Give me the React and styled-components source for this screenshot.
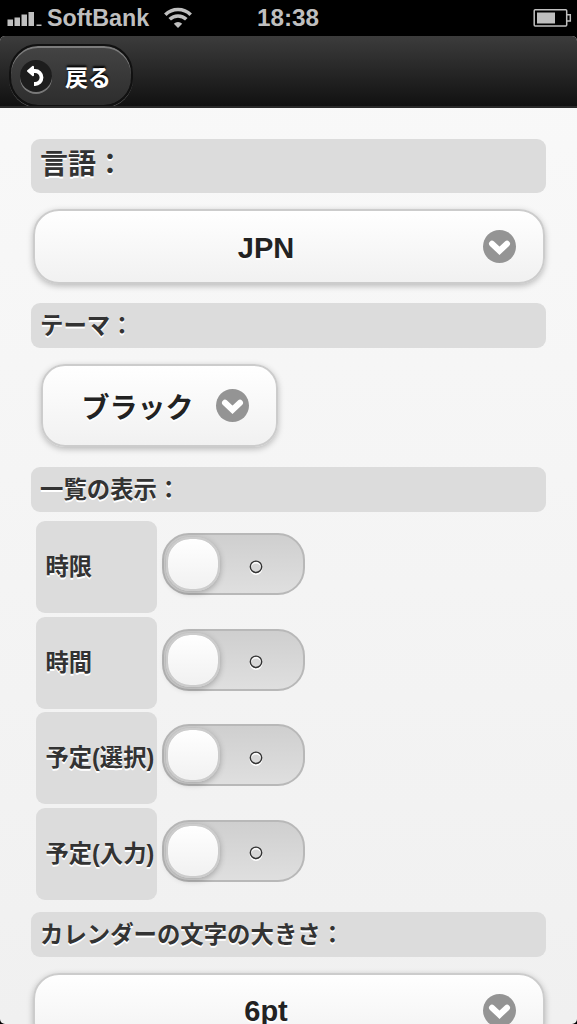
import { useState } from "react";
import styled, { createGlobalStyle } from "styled-components";

const GlobalStyle = createGlobalStyle`
  * {
    box-sizing: border-box;
  }
  body {
    margin: 0;
    background: #000;
    font-family: "Liberation Sans", "Noto Sans CJK JP", sans-serif;
    -webkit-font-smoothing: antialiased;
  }
`;

const Phone = styled.div`
  width: 577px;
  height: 1024px;
  overflow: hidden;
  display: flex;
  flex-direction: column;
  background: #000;
`;

const StatusBar = styled.div`
  height: 36px;
  flex-shrink: 0;
  display: grid;
  grid-template-columns: 1fr auto 1fr;
  align-items: center;
  padding: 0 5px 0 7px;
  color: #bfbfbf;
  font-weight: bold;
  line-height: 36px;
`;

const Carrier = styled.div`
  display: flex;
  align-items: center;
  font-size: 23.3px;
  svg {
    flex-shrink: 0;
  }
`;

const CarrierName = styled.span`
  margin: 0 15px 0 5px;
`;

const Clock = styled.div`
  padding-right: 3px;
  font-size: 24.3px;
`;

const Battery = styled.div`
  display: flex;
  justify-content: flex-end;
`;

const Screen = styled.div`
  flex: 1;
  min-height: 0;
  display: flex;
  flex-direction: column;
  overflow: hidden;
  border-radius: 5px;
  background: linear-gradient(#f9f9f9, #f0f0f0);
`;

const Header = styled.header`
  height: 72px;
  flex-shrink: 0;
  padding: 8px 9px 0;
  overflow: hidden;
  background: linear-gradient(#3c3c3c, #111);
  border-bottom: 2px solid #2a2a2a;
`;

const BackButton = styled.button`
  display: flex;
  align-items: center;
  width: 124px;
  height: 63px;
  padding: 0 0 0 9px;
  border: 2px solid #111;
  border-radius: 29px;
  background: linear-gradient(#444, #2d2d2d);
  background-clip: padding-box;
  box-shadow: inset 0 2px 0 rgba(255, 255, 255, 0.3), 0 1px 0 #565656;
  color: #fff;
  font: bold 23px "Noto Sans CJK JP", sans-serif;
  line-height: 60px;
  text-shadow: 0 -2px 2px #000;
`;

const BackIcon = styled.span`
  display: flex;
  align-items: center;
  justify-content: center;
  width: 32px;
  height: 32px;
  margin-right: 13px;
  border-radius: 50%;
  background: #1d1d1d;
  box-shadow: 0 2px 0 rgba(255, 255, 255, 0.35);
`;

const Content = styled.main`
  flex: 1;
  min-height: 0;
  padding: 31px 31px 0;
  overflow: hidden;
`;

const Heading = styled.h3`
  width: 515px;
  height: ${(props) => (props.$large ? "54px" : "45px")};
  margin: 0;
  padding-left: 9px;
  border-radius: 9px;
  background: #dcdcdc;
  color: #333;
  font: bold ${(props) => (props.$large ? "28px" : "23.4px")} "Noto Sans CJK JP", sans-serif;
  line-height: ${(props) => (props.$large ? "47px" : "42px")};
  text-shadow: 0 2px 0 #fff;
  white-space: nowrap;
`;

const SelectButton = styled.button`
  display: flex;
  align-items: center;
  justify-content: flex-end;
  width: ${(props) => (props.$small ? "237px" : "512px")};
  height: ${(props) => (props.$small ? "83px" : "75px")};
  margin: ${(props) => (props.$small ? "16px 0 20px 10px" : "16px 0 19px 2px")};
  padding: 0 27px 0 ${(props) => (props.$small ? "18px" : "0")};
  border: 2px solid #ccc;
  border-radius: ${(props) => (props.$small ? "24px" : "26px")};
  background: linear-gradient(#fff, #f1f1f1);
  box-shadow: 0 2px 6px rgba(0, 0, 0, 0.25);
  color: #222;
  font: bold ${(props) => (props.$small ? "28px" : "29px")} "Liberation Sans", "Noto Sans CJK JP", sans-serif;
  text-shadow: 0 2px 0 #fff;
`;

const SelectLabel = styled.span`
  flex: 1;
  padding: ${(props) => (props.$small ? "0 2px 0 0" : "3px 0 0 14px")};
  text-align: center;
  white-space: nowrap;
`;

const Settings = styled.div`
  display: grid;
  grid-auto-rows: 92px;
  row-gap: 3.6px;
  padding: 9px 0 12px 5px;
`;

const SettingRow = styled.div`
  display: grid;
  grid-template-columns: 121px 143px;
  column-gap: 5px;
`;

const SettingLabel = styled.div`
  padding-left: 9.5px;
  border-radius: 9px;
  background: #dcdcdc;
  color: #333;
  font: bold 23.3px "Liberation Sans", "Noto Sans CJK JP", sans-serif;
  line-height: 92px;
  text-shadow: 0 2px 0 #fff;
  white-space: nowrap;
`;

const Toggle = styled.button`
  display: flex;
  flex-direction: ${(props) => (props.$on ? "row-reverse" : "row")};
  align-items: center;
  width: 143px;
  height: 62px;
  margin-top: 12px;
  padding: 0 2px;
  border: 2px solid #b8b8b8;
  border-radius: 27px;
  background: linear-gradient(#cfcfcf, #dfdfdf);
`;

const Knob = styled.span`
  width: 54px;
  height: 54px;
  border: 2px solid #ccc;
  border-radius: 24px;
  background: linear-gradient(#fff, #f1f1f1);
  background-clip: padding-box;
  box-shadow: 0 2px 6px rgba(0, 0, 0, 0.28);
`;

const Mark = styled.span`
  flex: 1;
  display: flex;
  justify-content: center;
  padding: 7px 10px 0 0;
`;

const SignalIcon = () => (
  <svg width="35" height="36" fill="#bfbfbf">
    <path d="M0.5 19.5h5.500V26h-5.500zM7.500 17.500h5.500V26h-5.500zM14.500 14.500h5.500V26h-5.500zM21.500 12h5.500V26h-5.500zM29.500 24.500h5V26h-5z" />
  </svg>
);

const WifiIcon = () => (
  <svg width="28" height="36" fill="none" stroke="#bfbfbf" strokeWidth="3.600">
    <path d="M1.300 14.700a18.200 18.200 0 0 1 25.400 0M5.700 19.300a11.900 11.900 0 0 1 16.600 0" />
    <path d="M9.800 23.700a6 6 0 0 1 8.400 0L14 28z" fill="#bfbfbf" stroke="none" />
  </svg>
);

const BatteryIcon = () => (
  <svg width="39" height="18" fill="none" stroke="#bfbfbf" strokeWidth="1.500">
    <rect x="1.200" y="0.800" width="32.500" height="16.200" rx="1" />
    <path d="M34 5.700h3.300v6.300H34" />
    <rect x="4" y="3.500" width="18" height="11" fill="#bfbfbf" stroke="none" />
  </svg>
);

const ReturnIcon = () => (
  <svg width="20" height="22" fill="none" stroke="#fff">
    <path d="M5 7h4.500a5.500 5.500 0 0 1 0 13H8.500" strokeWidth="3.800" transform="translate(-0.500 -1)" />
    <path d="M2 6L7 1.800v8.400z" fill="#fff" strokeWidth="2" strokeLinejoin="round" />
  </svg>
);

const ArrowIcon = () => (
  <svg width="33" height="33">
    <circle cx="16.500" cy="16.500" r="16.500" fill="#949494" />
    <path
      d="M9 13.800L16.500 20.800L24 13.800"
      fill="none"
      stroke="#fff"
      strokeWidth="6"
      strokeLinecap="round"
      strokeLinejoin="miter"
    />
  </svg>
);

const CircleMark = () => (
  <svg width="16" height="18" fill="none" strokeWidth="1.400">
    <circle cx="8" cy="9.500" r="5.700" stroke="#fff" />
    <circle cx="8" cy="7.800" r="5.700" stroke="#333" />
  </svg>
);

const labels = ["時限", "時間", "予定(選択)", "予定(入力)"];

const Select = ({ children, small }) => (
  <SelectButton $small={small}>
    <SelectLabel $small={small}>{children}</SelectLabel>
    <ArrowIcon />
  </SelectButton>
);

const App = () => {
  const [enabled, setEnabled] = useState({});

  const handleToggle = (label) => {
    setEnabled({ ...enabled, [label]: !enabled[label] });
  };

  return (
    <Phone>
      <GlobalStyle />
      <StatusBar>
        <Carrier>
          <SignalIcon />
          <CarrierName>SoftBank</CarrierName>
          <WifiIcon />
        </Carrier>
        <Clock>18:38</Clock>
        <Battery>
          <BatteryIcon />
        </Battery>
      </StatusBar>
      <Screen>
        <Header>
          <BackButton>
            <BackIcon>
              <ReturnIcon />
            </BackIcon>
            戻る
          </BackButton>
        </Header>
        <Content>
          <Heading $large>言語：</Heading>
          <Select>JPN</Select>
          <Heading>テーマ：</Heading>
          <Select small>ブラック</Select>
          <Heading>一覧の表示：</Heading>
          <Settings>
            {labels.map((label) => (
              <SettingRow key={label}>
                <SettingLabel>{label}</SettingLabel>
                <Toggle
                  $on={enabled[label]}
                  aria-label={label}
                  onClick={() => handleToggle(label)}
                >
                  <Knob />
                  <Mark>
                    <CircleMark />
                  </Mark>
                </Toggle>
              </SettingRow>
            ))}
          </Settings>
          <Heading>カレンダーの文字の大きさ：</Heading>
          <Select>6pt</Select>
        </Content>
      </Screen>
    </Phone>
  );
};

export default App;
